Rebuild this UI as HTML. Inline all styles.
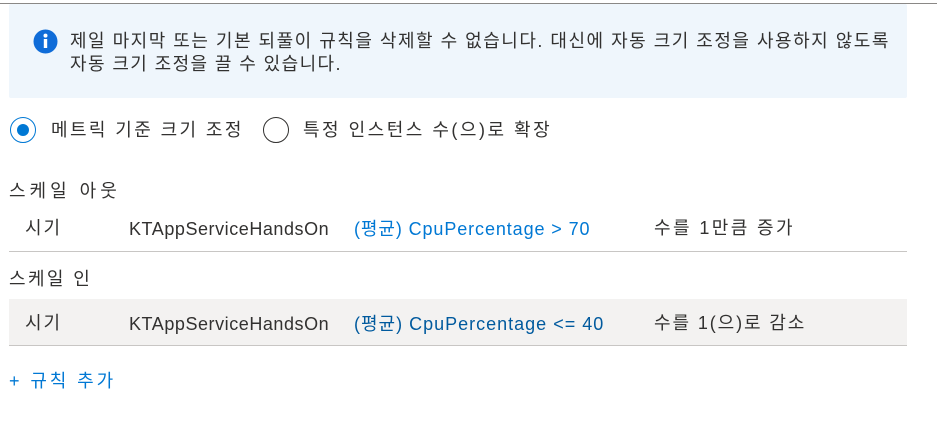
<!DOCTYPE html>
<html><head><meta charset="utf-8"><style>
*{margin:0;padding:0;box-sizing:border-box}
body{width:937px;height:422px;background:#fff;font-family:"Liberation Sans","Noto Sans CJK KR",sans-serif;color:#323130;font-size:18px;position:relative;overflow:hidden}
.a{position:absolute;white-space:nowrap;line-height:22px}
.top{position:absolute;left:0;top:3px;width:937px;height:1px;background:#8a8886}
.box{position:absolute;left:9px;top:4px;width:898px;height:94px;background:#eff6fc;border-radius:2px}
.blue{color:#0078d4}
.dblue{color:#005a9e}
.line{position:absolute;left:9px;width:898px;height:1px;background:#c8c6c4}
.radio{position:absolute;width:26px;height:26px;border-radius:50%;border:1px solid #323130}
</style></head><body>
<div class="top"></div>
<div class="box"></div>
<svg style="position:absolute;left:33px;top:29px" width="25" height="25" viewBox="0 0 25 25"><circle cx="12.5" cy="12.5" r="12" fill="#0f6cd8"/><rect x="10.8" y="10" width="3.4" height="9" fill="#fff"/><circle cx="12.5" cy="6.6" r="2" fill="#fff"/></svg>
<div class="a" style="left:70px;top:30px;letter-spacing:1.5px">제일 마지막 또는 기본 되풀이 규칙을 삭제할 수 없습니다. 대신에 자동 크기 조정을 사용하지 않도록</div>
<div class="a" style="left:70px;top:53px;letter-spacing:1.4px">자동 크기 조정을 끌 수 있습니다.</div>
<div class="radio" style="left:10px;top:117px;border-color:#0078d4"></div>
<div style="position:absolute;left:17px;top:124px;width:12px;height:12px;border-radius:50%;background:#0078d4"></div>
<div class="a" style="left:51px;top:119px;letter-spacing:2.4px">메트릭 기준 크기 조정</div>
<div class="radio" style="left:263px;top:117px"></div>
<div class="a" style="left:303px;top:119px;letter-spacing:2.5px">특정 인스턴스 수(으)로 확장</div>
<div class="a" style="left:9px;top:180px;letter-spacing:4px">스케일 아웃</div>
<div class="a" style="left:25px;top:217px;letter-spacing:2px">시기</div>
<div class="a" style="left:129px;top:218px;letter-spacing:0.55px">KTAppServiceHandsOn</div>
<div class="a blue" style="left:354px;top:218px;letter-spacing:0.9px">(평균) CpuPercentage &gt; 70</div>
<div class="a" style="left:654px;top:217px;letter-spacing:2.4px">수를 1만큼 증가</div>
<div class="line" style="top:251px"></div>
<div class="a" style="left:9px;top:268px;letter-spacing:2.4px">스케일 인</div>
<div style="position:absolute;left:9px;top:299px;width:898px;height:46px;background:#f3f2f1"></div>
<div class="a" style="left:25px;top:312px;letter-spacing:2px">시기</div>
<div class="a" style="left:129px;top:313px;letter-spacing:0.55px">KTAppServiceHandsOn</div>
<div class="a dblue" style="left:354px;top:313px;letter-spacing:1px">(평균) CpuPercentage &lt;= 40</div>
<div class="a" style="left:654px;top:312px;letter-spacing:1.9px">수를 1(으)로 감소</div>
<div class="line" style="top:345px"></div>
<div class="a blue" style="left:9px;top:370px;letter-spacing:2.9px">+ 규칙 추가</div>
</body></html>
